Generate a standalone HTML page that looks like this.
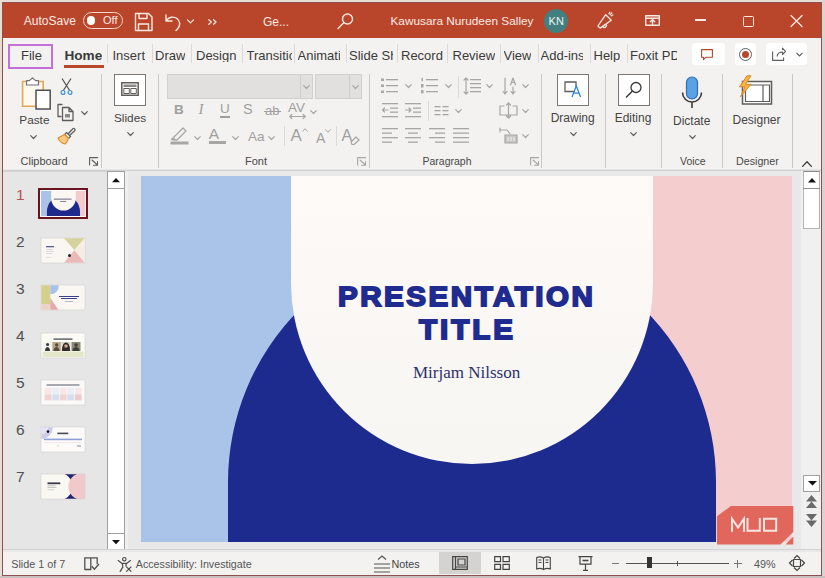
<!DOCTYPE html>
<html><head><meta charset="utf-8">
<style>
*{box-sizing:border-box;margin:0;padding:0}
html,body{width:825px;height:578px;overflow:hidden;background:#e9ded3;font-family:"Liberation Sans",sans-serif;position:relative}
.a{position:absolute}
.t{position:absolute;line-height:1;white-space:nowrap;color:#3b3a39}
svg{position:absolute;overflow:visible}
.tb{fill:none;stroke:#fbe9e3;stroke-width:1.4;stroke-linecap:round;stroke-linejoin:round}
.tab{position:absolute;top:49px;font-size:13px;line-height:1;white-space:nowrap;color:#3b3a39;overflow:hidden}
.sep{position:absolute;top:44px;width:1px;height:19px;background:#dcdad8}
.gsep{position:absolute;top:74px;width:1px;height:94px;background:#c9c7c5}
.ic{fill:none;stroke:#605e5c;stroke-width:1.2;stroke-linecap:round;stroke-linejoin:round}
.dis{fill:none;stroke:#a8a6a4;stroke-width:1.2;stroke-linecap:round;stroke-linejoin:round}
.lbl{position:absolute;font-size:12px;line-height:1;white-space:nowrap;color:#464442}
.glbl{position:absolute;font-size:11px;line-height:1;white-space:nowrap;color:#4a4846}
</style></head><body>
<!-- window frame -->
<div class="a" style="left:822px;top:0;width:3px;height:578px;background:#d8d4d0"></div>
<div class="a" style="left:0;top:576px;width:825px;height:2px;background:#c8c0bf"></div>
<div class="a" style="left:2px;top:2px;width:820px;height:574px;border:1px solid #8e5052;background:#f3f2f1"></div>
<!-- title bar -->
<div class="a" style="left:3px;top:3px;width:818px;height:35px;background:#b9462b"></div>
<div class="t" style="left:23.8px;top:15.2px;font-size:12px;color:#fbeae4">AutoSave</div>
<div class="a" style="left:83px;top:12px;width:40px;height:17px;border:1.5px solid #f3d3c8;border-radius:9px"></div>
<div class="a" style="left:86.8px;top:16.3px;width:8.6px;height:8.6px;border-radius:50%;background:#fff"></div>
<div class="t" style="left:103px;top:15.2px;font-size:11px;color:#fbeae4">Off</div>
<!-- save -->
<svg style="left:134px;top:12px" width="20" height="20" viewBox="0 0 20 20"><path class="tb" d="M1.5 1.5h13l3.5 3.5v13.5h-16.5z M5 1.5v5h8v-5 M4.5 18.5v-6.5h10v6.5"/></svg>
<!-- undo -->
<svg style="left:164px;top:13px" width="20" height="18" viewBox="0 0 20 18"><path class="tb" d="M2 2v6h6 M2.5 7.5c2-3.5 7-4.5 10.5-2 3.5 2.6 3.5 7.5 0.5 10.5l-1.5 1.5"/></svg>
<svg style="left:187px;top:19px" width="7" height="5" viewBox="0 0 7 5"><path class="tb" d="M0.5 0.8l3 3 3-3" style="stroke-width:1.2"/></svg>
<svg style="left:208px;top:18.5px" width="10" height="6" viewBox="0 0 10 6"><path class="tb" d="M0.8 0.8l2.5 2.2-2.5 2.2 M5.5 0.8l2.5 2.2-2.5 2.2" style="stroke-width:1.3"/></svg>
<div class="t" style="left:263px;top:16.2px;font-size:12px;color:#fbeae4">Ge...</div>
<!-- search -->
<svg style="left:337px;top:13px" width="17" height="17" viewBox="0 0 17 17"><circle class="tb" cx="10.5" cy="6" r="5"/><path class="tb" d="M7 9.5l-6 6"/></svg>
<div class="t" style="left:390.5px;top:16.2px;font-size:11.8px;color:#fbeae4">Kawusara Nurudeen Salley</div>
<div class="a" style="left:544.3px;top:8.8px;width:24px;height:24px;border-radius:50%;background:#447f80"></div>
<div class="t" style="left:548.6px;top:15.5px;font-size:11px;color:#eef5f5">KN</div>
<!-- megaphone -->
<svg style="left:596px;top:11px" width="20" height="20" viewBox="0 0 20 20"><path class="tb" d="M1.9 15L9.7 3.7 15.3 9.3 4.1 17.1z M6.8 15.6a2 2 0 0 0 3.3-2.4 M13 2.6l0.9-1.4 M15.2 4.8l1.6-0.8 M14.2 3.6l1.6-1.6" style="stroke-width:1.3"/></svg>
<!-- ribbon display -->
<svg style="left:645px;top:15.3px" width="15" height="11" viewBox="0 0 15 11"><path class="tb" d="M0.7 0.7h13.6v9.6h-13.6z M0.7 3.2h13.6 M7.5 9.5v-4.5 M5.3 6.8l2.2-2.2 2.2 2.2" style="stroke-width:1.4"/></svg>
<div class="a" style="left:695px;top:19.3px;width:11.3px;height:1.5px;background:#fbeae4"></div>
<div class="a" style="left:743px;top:15.5px;width:11px;height:11px;border:1.3px solid #fbeae4;border-radius:1.5px"></div>
<svg style="left:790px;top:15px" width="13" height="12" viewBox="0 0 13 12"><path class="tb" d="M1 0.5l11 11 M12 0.5l-11 11" style="stroke-width:1.3"/></svg>

<!-- tabs row -->
<div class="a" style="left:8px;top:43.5px;width:45px;height:25px;border:2.5px solid #c470d8"></div>
<div class="tab" style="left:21px">File</div>
<div class="tab" style="left:64.5px;font-weight:700;font-size:13.6px;top:48.6px">Home</div>
<div class="a" style="left:64px;top:64.7px;width:40px;height:3px;background:#b8472b"></div>
<div class="sep" style="left:107px"></div>
<div class="tab" style="left:112.5px">Insert</div>
<div class="sep" style="left:152px"></div>
<div class="tab" style="left:155px">Draw</div>
<div class="sep" style="left:191px"></div>
<div class="tab" style="left:196px">Design</div>
<div class="sep" style="left:242px"></div>
<div class="tab" style="left:246.5px;width:45px">Transitions</div>
<div class="sep" style="left:294px"></div>
<div class="tab" style="left:297.5px;width:42.5px">Animations</div>
<div class="sep" style="left:345.5px"></div>
<div class="tab" style="left:349px;width:43.5px">Slide Show</div>
<div class="sep" style="left:397px"></div>
<div class="tab" style="left:401px">Record</div>
<div class="sep" style="left:447px"></div>
<div class="tab" style="left:452.5px">Review</div>
<div class="sep" style="left:499.5px"></div>
<div class="tab" style="left:503.5px">View</div>
<div class="sep" style="left:537.5px"></div>
<div class="tab" style="left:540.5px;width:42.5px">Add-ins</div>
<div class="sep" style="left:590px"></div>
<div class="tab" style="left:593.5px">Help</div>
<div class="sep" style="left:626.5px"></div>
<div class="tab" style="left:630px;width:47px">Foxit PDF</div>
<div class="a" style="left:692px;top:43px;width:33px;height:22px;background:#fff;border-radius:3px"></div>
<svg style="left:701px;top:49px" width="12" height="12" viewBox="0 0 12 12"><path d="M0.6 0.6h10.8v7.6h-6.4l-2.5 2.5v-2.5h-1.9z" fill="none" stroke="#b8472b" stroke-width="1.1" stroke-linejoin="round"/></svg>
<div class="a" style="left:735px;top:43px;width:21px;height:22px;background:#fff;border-radius:3px"></div>
<div class="a" style="left:739px;top:47.5px;width:13px;height:13px;border-radius:50%;border:1.2px solid #605e5c"></div>
<div class="a" style="left:742px;top:50.5px;width:7px;height:7px;border-radius:50%;background:#b8472b"></div>
<div class="a" style="left:766px;top:43px;width:41px;height:22px;background:#fff;border-radius:3px"></div>
<svg style="left:772px;top:47px" width="14" height="14" viewBox="0 0 14 14"><path d="M0.6 4.5v8.9h11v-3 M5 9.5c0.5-3 2.5-4.5 5.5-4.5v2.5l3-3.2-3-3.2v2" fill="none" stroke="#605e5c" stroke-width="1.1" stroke-linejoin="round"/></svg>
<svg style="left:796px;top:52px" width="7" height="5" viewBox="0 0 7 5"><path d="M0.5 0.8l3 3 3-3" fill="none" stroke="#605e5c" stroke-width="1.2"/></svg>
<!-- Clipboard -->
<svg style="left:21px;top:77px" width="32" height="33" viewBox="0 0 32 33"><path d="M1.6 4.5h20.6v24.8h-20.6z" fill="#fdf8f0" stroke="#e0a850" stroke-width="1.6"/><path d="M5.5 8V3.6H8.5L11.5 0.9 14.5 3.6H17.5V8z" fill="#fff" stroke="#707070" stroke-width="1.2" stroke-linejoin="round"/><path d="M15 13.3h14.2v18.6h-14.2z" fill="#fff" stroke="#505050" stroke-width="1.5"/></svg>
<div class="lbl" style="left:19.3px;top:115.2px;font-size:11.8px">Paste</div>
<svg style="left:30px;top:135px" width="7" height="5" viewBox="0 0 7 5"><path class="ic" d="M0.7 0.7l2.8 2.8 2.8-2.8"/></svg>
<svg style="left:60px;top:78px" width="13" height="17" viewBox="0 0 13 17"><path d="M2 0.5l7.8 12.2 M11 0.5l-7.8 12.2" fill="none" stroke="#505050" stroke-width="1.2"/><circle cx="3" cy="14.4" r="1.9" fill="none" stroke="#3a8fd8" stroke-width="1.2"/><circle cx="10" cy="14.4" r="1.9" fill="none" stroke="#3a8fd8" stroke-width="1.2"/></svg>
<svg style="left:57px;top:102px" width="19" height="19" viewBox="0 0 19 19"><path class="ic" d="M5 2.5h-4v12h3 M5.5 5.5h6.5l4 4v9h-10.5z M12 5.5v4h4" style="stroke-width:1.3"/><path d="M8 12h5v3.5h-5z" fill="#8a8886"/></svg>
<svg style="left:81px;top:111px" width="7" height="5" viewBox="0 0 7 5"><path class="ic" d="M0.7 0.7l2.8 2.8 2.8-2.8"/></svg>
<svg style="left:57px;top:126px" width="19" height="19" viewBox="0 0 19 19"><path d="M11 8l5-5.5a1.6 1.6 0 0 1 2 2l-5.5 5" fill="none" stroke="#605e5c" stroke-width="1.3"/><path d="M9.5 6.5l4 4-2 2-4-4z" fill="#fff" stroke="#605e5c" stroke-width="1.2"/><path d="M7.5 8.5l4 4-3 5.5c-3-0.5-6.5-3-7.5-6z" fill="#f8c885" stroke="#e08f2e" stroke-width="1.2" stroke-linejoin="round"/></svg>
<div class="glbl" style="left:20.5px;top:156.3px">Clipboard</div>
<svg style="left:89px;top:157px" width="10" height="9" viewBox="0 0 10 9"><path class="ic" d="M0.6 8v-7.4h8 M3 3l5.5 5 M8.5 4.5v3.8h-4" style="stroke-width:1.1"/></svg>
<div class="gsep" style="left:101px"></div>
<!-- Slides -->
<div class="a" style="left:114px;top:74px;width:32px;height:32px;background:#fff;border:1.6px solid #7a7876"></div>
<svg style="left:121px;top:82px" width="18" height="14" viewBox="0 0 18 14"><path d="M0.8 0.8h16.4v12.4h-16.4z" fill="#fff" stroke="#605e5c" stroke-width="1.5"/><path d="M2.5 2.5h13v2.5h-13z" fill="#8a8886"/><path d="M2.8 6.5h5.5v5h-5.5z M9.8 6.5h5.5v5h-5.5z" fill="none" stroke="#605e5c" stroke-width="1"/></svg>
<div class="lbl" style="left:114px;top:112.6px;font-size:11.8px">Slides</div>
<svg style="left:127px;top:132px" width="7" height="5" viewBox="0 0 7 5"><path class="ic" d="M0.7 0.7l2.8 2.8 2.8-2.8"/></svg>
<div class="gsep" style="left:158px"></div>
<!-- Font -->
<div class="a" style="left:167px;top:74px;width:146px;height:25px;background:#e1e0df;border:1px solid #d2d0ce"></div>
<div class="a" style="left:299.5px;top:75px;width:1px;height:23px;background:#d0cecc"></div>
<svg style="left:303px;top:85px" width="7" height="5" viewBox="0 0 7 5"><path class="dis" d="M0.7 0.7l2.8 2.8 2.8-2.8"/></svg>
<div class="a" style="left:315px;top:74px;width:46.5px;height:25px;background:#e1e0df;border:1px solid #d2d0ce"></div>
<div class="a" style="left:348.5px;top:75px;width:1px;height:23px;background:#d0cecc"></div>
<svg style="left:352px;top:85px" width="7" height="5" viewBox="0 0 7 5"><path class="dis" d="M0.7 0.7l2.8 2.8 2.8-2.8"/></svg>
<div class="t" style="left:174px;top:102.9px;font-size:13.5px;font-weight:700;color:#a19f9d">B</div>
<div class="t" style="left:198.5px;top:102px;font-size:15px;font-style:italic;font-family:'Liberation Serif';color:#a19f9d">I</div>
<div class="t" style="left:220px;top:102.3px;font-size:13.5px;color:#a19f9d">U</div>
<div class="a" style="left:220px;top:116.4px;width:10px;height:1.2px;background:#a19f9d"></div>
<div class="t" style="left:243px;top:102.3px;font-size:14.5px;color:#a19f9d">S</div>
<div class="t" style="left:265px;top:104.2px;font-size:13px;color:#a19f9d">ab</div>
<div class="a" style="left:264px;top:111px;width:17px;height:1.2px;background:#a19f9d"></div>
<div class="t" style="left:288px;top:101.3px;font-size:13.5px;color:#a19f9d">AV</div>
<svg style="left:288.5px;top:113.5px" width="17" height="5" viewBox="0 0 17 5"><path class="dis" d="M0.7 2.5h15.6 M2.8 0.5l-2 2 2 2 M14.2 0.5l2 2-2 2"/></svg>
<svg style="left:309.5px;top:110px" width="7" height="5" viewBox="0 0 7 5"><path class="dis" d="M0.7 0.7l2.8 2.8 2.8-2.8"/></svg>
<svg style="left:169.5px;top:124.6px" width="19" height="20" viewBox="0 0 19 20"><path class="dis" d="M4 12l9-9 3 3-9 9h-3z M3 13l-1.5 1.5h3" style="stroke-width:1.3"/><rect x="0.5" y="16.5" width="18" height="3" fill="#a8a6a4"/></svg>
<svg style="left:193.5px;top:135.5px" width="7" height="5" viewBox="0 0 7 5"><path class="dis" d="M0.7 0.7l2.8 2.8 2.8-2.8"/></svg>
<div class="t" style="left:208.8px;top:125.5px;font-size:15.5px;color:#a19f9d">A</div>
<div class="a" style="left:208.5px;top:140.8px;width:17px;height:3.4px;background:#a8a6a4"></div>
<svg style="left:232px;top:135.5px" width="7" height="5" viewBox="0 0 7 5"><path class="dis" d="M0.7 0.7l2.8 2.8 2.8-2.8"/></svg>
<div class="t" style="left:248px;top:129.5px;font-size:13.5px;color:#a19f9d">Aa</div>
<svg style="left:268px;top:135.5px" width="7" height="5" viewBox="0 0 7 5"><path class="dis" d="M0.7 0.7l2.8 2.8 2.8-2.8"/></svg>
<div class="a" style="left:283.5px;top:126px;width:1px;height:20px;background:#dcdad8"></div>
<div class="t" style="left:290.5px;top:127px;font-size:17px;color:#a19f9d">A</div>
<svg style="left:302px;top:128px" width="6" height="4" viewBox="0 0 6 4"><path class="dis" d="M0.6 3.3l2.4-2.6 2.4 2.6" style="stroke-width:1"/></svg>
<div class="t" style="left:316px;top:130.5px;font-size:14px;color:#a19f9d">A</div>
<svg style="left:325px;top:129px" width="6" height="4" viewBox="0 0 6 4"><path class="dis" d="M0.6 0.7l2.4 2.6 2.4-2.6" style="stroke-width:1"/></svg>
<div class="a" style="left:336px;top:126px;width:1px;height:20px;background:#dcdad8"></div>
<div class="t" style="left:341.5px;top:127.5px;font-size:16px;color:#a19f9d">A</div>
<svg style="left:350px;top:136px" width="10" height="9" viewBox="0 0 10 9"><path class="dis" d="M1 6l5-5 3 3-5 4.5h-2z"/></svg>
<div class="glbl" style="left:245px;top:155.5px">Font</div>
<svg style="left:357px;top:157px" width="10" height="9" viewBox="0 0 10 9"><path class="dis" d="M0.6 8v-7.4h8 M3 3l5.5 5 M8.5 4.5v3.8h-4" style="stroke-width:1.1"/></svg>
<div class="gsep" style="left:369px"></div>
<!-- Paragraph -->
<svg style="left:380px;top:77px" width="19" height="18" viewBox="0 0 19 18"><g fill="#a8a6a4"><rect x="1" y="1.5" width="3" height="2.5"/><rect x="1" y="7.5" width="3" height="2.5"/><rect x="1" y="13.5" width="3" height="2.5"/><rect x="6" y="2" width="12" height="1.3"/><rect x="6" y="8" width="12" height="1.3"/><rect x="6" y="14" width="12" height="1.3"/></g></svg>
<svg style="left:405px;top:84px" width="7" height="5" viewBox="0 0 7 5"><path class="dis" d="M0.7 0.7l2.8 2.8 2.8-2.8"/></svg>
<svg style="left:420px;top:77px" width="19" height="18" viewBox="0 0 19 18"><g fill="#a8a6a4"><rect x="1.5" y="0.8" width="1.5" height="3.5"/><rect x="1" y="7" width="2.5" height="3.5"/><rect x="1" y="13" width="2.5" height="3.5"/><rect x="6" y="2" width="12" height="1.3"/><rect x="6" y="8" width="12" height="1.3"/><rect x="6" y="14" width="12" height="1.3"/></g></svg>
<svg style="left:444.5px;top:84px" width="7" height="5" viewBox="0 0 7 5"><path class="dis" d="M0.7 0.7l2.8 2.8 2.8-2.8"/></svg>
<div class="a" style="left:458px;top:76px;width:1px;height:22px;background:#dcdad8"></div>
<svg style="left:463px;top:77px" width="19" height="18" viewBox="0 0 19 18"><path class="dis" d="M3 1v16 M1 3l2-2 2 2 M1 15l2 2 2-2"/><g fill="#a8a6a4"><rect x="7" y="2" width="11" height="1.3"/><rect x="7" y="6" width="11" height="1.3"/><rect x="7" y="10" width="11" height="1.3"/><rect x="7" y="14" width="11" height="1.3"/></g></svg>
<svg style="left:486px;top:84px" width="7" height="5" viewBox="0 0 7 5"><path class="dis" d="M0.7 0.7l2.8 2.8 2.8-2.8"/></svg>
<svg style="left:502px;top:77px" width="15" height="18" viewBox="0 0 15 18"><path class="dis" d="M3 1v16 M1 14.5l2 2.5 2-2.5 M11 10v7 M9 14.5l2 2.5 2-2.5 M8.5 8l2.5-7 2.5 7 M9.3 5.5h3.4"/></svg>
<svg style="left:522px;top:84px" width="7" height="5" viewBox="0 0 7 5"><path class="dis" d="M0.7 0.7l2.8 2.8 2.8-2.8"/></svg>
<svg style="left:381px;top:102px" width="18" height="17" viewBox="0 0 18 17"><g fill="#a8a6a4"><rect x="1" y="1" width="16" height="1.3"/><rect x="9" y="5.5" width="8" height="1.3"/><rect x="9" y="9.5" width="8" height="1.3"/><rect x="1" y="14" width="16" height="1.3"/></g><path class="dis" d="M7 8h-5.5 M3.5 6l-2 2 2 2"/></svg>
<svg style="left:404px;top:102px" width="18" height="17" viewBox="0 0 18 17"><g fill="#a8a6a4"><rect x="1" y="1" width="16" height="1.3"/><rect x="9" y="5.5" width="8" height="1.3"/><rect x="9" y="9.5" width="8" height="1.3"/><rect x="1" y="14" width="16" height="1.3"/></g><path class="dis" d="M1.5 8h5.5 M5 6l2 2-2 2"/></svg>
<div class="a" style="left:428px;top:101px;width:1px;height:20px;background:#dcdad8"></div>
<svg style="left:434px;top:104px" width="15" height="12" viewBox="0 0 15 12"><g fill="#a8a6a4"><rect x="0.5" y="2" width="6" height="1.3"/><rect x="0.5" y="6" width="6" height="1.3"/><rect x="0.5" y="10" width="6" height="1.3"/><rect x="8.5" y="2" width="6" height="1.3"/><rect x="8.5" y="6" width="6" height="1.3"/><rect x="8.5" y="10" width="6" height="1.3"/></g></svg>
<svg style="left:454.5px;top:109px" width="7" height="5" viewBox="0 0 7 5"><path class="dis" d="M0.7 0.7l2.8 2.8 2.8-2.8"/></svg>
<svg style="left:499px;top:102px" width="19" height="17" viewBox="0 0 19 17"><path class="dis" d="M1 4h4 M14 4h4 M1 13h17 M1 4v9 M18 4v9 M9.5 1v15 M7.5 3l2-2 2 2 M7.5 14l2 2 2-2"/></svg>
<svg style="left:522px;top:109px" width="7" height="5" viewBox="0 0 7 5"><path class="dis" d="M0.7 0.7l2.8 2.8 2.8-2.8"/></svg>
<svg style="left:381px;top:127px" width="18" height="17" viewBox="0 0 18 17"><g fill="#a8a6a4"><rect x="1" y="1" width="16" height="1.3"/><rect x="1" y="5.5" width="10" height="1.3"/><rect x="1" y="10" width="16" height="1.3"/><rect x="1" y="14.5" width="10" height="1.3"/></g></svg>
<svg style="left:404px;top:127px" width="18" height="17" viewBox="0 0 18 17"><g fill="#a8a6a4"><rect x="1" y="1" width="16" height="1.3"/><rect x="4" y="5.5" width="10" height="1.3"/><rect x="1" y="10" width="16" height="1.3"/><rect x="4" y="14.5" width="10" height="1.3"/></g></svg>
<svg style="left:428px;top:127px" width="18" height="17" viewBox="0 0 18 17"><g fill="#a8a6a4"><rect x="1" y="1" width="16" height="1.3"/><rect x="7" y="5.5" width="10" height="1.3"/><rect x="1" y="10" width="16" height="1.3"/><rect x="7" y="14.5" width="10" height="1.3"/></g></svg>
<svg style="left:452px;top:127px" width="18" height="17" viewBox="0 0 18 17"><g fill="#a8a6a4"><rect x="1" y="1" width="16" height="1.3"/><rect x="1" y="5.5" width="16" height="1.3"/><rect x="1" y="10" width="16" height="1.3"/><rect x="1" y="14.5" width="16" height="1.3"/></g></svg>
<svg style="left:499px;top:127px" width="20" height="17" viewBox="0 0 20 17"><path class="dis" d="M1 3h7l3 4 M1 1v4"/><path d="M6 8h12v8h-12z" fill="#c8c6c4" stroke="#a8a6a4" stroke-width="1.2"/><path d="M9 10v4 M12 10v4 M15 10v4" stroke="#f3f2f1" stroke-width="1"/></svg>
<svg style="left:522px;top:134px" width="7" height="5" viewBox="0 0 7 5"><path class="dis" d="M0.7 0.7l2.8 2.8 2.8-2.8"/></svg>
<div class="glbl" style="left:422.5px;top:155.7px;font-size:10.5px">Paragraph</div>
<svg style="left:529.5px;top:157px" width="10" height="9" viewBox="0 0 10 9"><path class="dis" d="M0.6 8v-7.4h8 M3 3l5.5 5 M8.5 4.5v3.8h-4" style="stroke-width:1.1"/></svg>
<div class="gsep" style="left:541px"></div>
<!-- Drawing -->
<div class="a" style="left:557px;top:74px;width:32px;height:32px;background:#fff;border:1.6px solid #7a7876"></div>
<svg style="left:564px;top:81px" width="18" height="17" viewBox="0 0 18 17"><path d="M10.5 10.5h-9.5v-9.5h11v6" fill="none" stroke="#605e5c" stroke-width="1.3"/><path d="M8 16l4.3-11 4.3 11 M9.6 12.2h5.4" fill="none" stroke="#2b88d8" stroke-width="1.3"/></svg>
<div class="lbl" style="left:550.7px;top:112.2px">Drawing</div>
<svg style="left:570px;top:132px" width="7" height="5" viewBox="0 0 7 5"><path class="ic" d="M0.7 0.7l2.8 2.8 2.8-2.8"/></svg>
<div class="gsep" style="left:605px"></div>
<!-- Editing -->
<div class="a" style="left:618px;top:74px;width:32px;height:32px;background:#fff;border:1.6px solid #7a7876"></div>
<svg style="left:625px;top:81px" width="18" height="18" viewBox="0 0 18 18"><circle cx="11" cy="6.5" r="5" fill="none" stroke="#3b3a39" stroke-width="1.3"/><path d="M7.5 10l-6 6" stroke="#3b3a39" stroke-width="1.5" stroke-linecap="round"/></svg>
<div class="lbl" style="left:614.7px;top:112.2px">Editing</div>
<svg style="left:630px;top:132px" width="7" height="5" viewBox="0 0 7 5"><path class="ic" d="M0.7 0.7l2.8 2.8 2.8-2.8"/></svg>
<div class="gsep" style="left:661px"></div>
<!-- Voice -->
<svg style="left:681px;top:76px" width="22" height="33" viewBox="0 0 22 33"><rect x="5.5" y="1" width="11" height="22" rx="5.5" fill="#5ba1e4" stroke="#2c6db5" stroke-width="1.2"/><path d="M1.5 16.5a9.5 9.5 0 0 0 19 0 M11 26v6" fill="none" stroke="#3b3a39" stroke-width="1.6"/></svg>
<div class="lbl" style="left:673px;top:115.2px">Dictate</div>
<svg style="left:689px;top:135px" width="7" height="5" viewBox="0 0 7 5"><path class="ic" d="M0.7 0.7l2.8 2.8 2.8-2.8"/></svg>
<div class="glbl" style="left:680px;top:155.7px;font-size:10.5px">Voice</div>
<div class="gsep" style="left:722px"></div>
<!-- Designer -->
<svg style="left:738px;top:75px" width="36" height="31" viewBox="0 0 36 31"><path d="M4.5 6.5h29v22.5h-29z" fill="#fff" stroke="#605e5c" stroke-width="1.5"/><path d="M7.5 10h24v16.5h-24z M25 10v16.5" fill="none" stroke="#605e5c" stroke-width="1.2"/><path d="M9 0.8l-7.5 11h5.5l-4.5 10 10.5-12.5h-5.5l5.5-8.5z" fill="#f7b640" stroke="#d8882a" stroke-width="1" stroke-linejoin="round"/></svg>
<div class="lbl" style="left:732.5px;top:114.3px">Designer</div>
<div class="glbl" style="left:736px;top:155.7px;font-size:10.7px">Designer</div>
<div class="gsep" style="left:792px"></div>
<svg style="left:802px;top:160.5px" width="10" height="6" viewBox="0 0 10 6"><path class="ic" d="M0.6 5.4l4.4-4.6 4.4 4.6" style="stroke-width:1.3;stroke:#3b3a39"/></svg>

<!-- main area -->
<div class="a" style="left:3px;top:169px;width:818px;height:382px;background:#e6e6e6"></div>
<div class="a" style="left:3px;top:169.5px;width:818px;height:2.5px;background:#d2d2d2"></div>
<div class="a" style="left:125px;top:171px;width:678px;height:379px;background:#e8e8e8"></div>
<!-- thumbnails -->
<div class="t" style="left:16px;top:187.2px;font-size:15.5px;color:#b9524d">1</div>
<div class="a" style="left:37.7px;top:187.8px;width:50px;height:31px;border:2.6px solid #6a1420;background:#fff"></div>
<svg style="left:40.8px;top:190.8px" width="44.2" height="25" viewBox="0 0 651 366" preserveAspectRatio="none">
<rect width="651" height="366" fill="#a8c3e7"/><rect x="325" width="326" height="366" fill="#f4cbcd"/>
<path d="M87 366V304a244 244 0 0 1 488 0V366z" fill="#1e2a8c"/>
<path d="M150 0H512V105a181 181 0 0 1-362 0z" fill="#faf7f2"/>
<rect x="189" y="112" width="261" height="13" fill="#2a2d5a" opacity="0.8"/><rect x="282" y="146" width="90" height="12" fill="#2a2d5a" opacity="0.7"/>
</svg>
<div class="t" style="left:16px;top:233.8px;font-size:15.5px;color:#505050">2</div>
<div class="t" style="left:16px;top:280.9px;font-size:15.5px;color:#505050">3</div>
<div class="t" style="left:16px;top:328.0px;font-size:15.5px;color:#505050">4</div>
<div class="t" style="left:16px;top:375.1px;font-size:15.5px;color:#505050">5</div>
<div class="t" style="left:16px;top:422.2px;font-size:15.5px;color:#505050">6</div>
<div class="t" style="left:16px;top:469.3px;font-size:15.5px;color:#505050">7</div>
<!-- thumb 2 -->
<svg style="left:40.5px;top:238.3px" width="44" height="25" viewBox="0 0 44 25">
<rect x="0" y="0" width="44" height="25" fill="#faf7f2" stroke="#cfcfcf" stroke-width="0.6"/>
<path d="M23 0.3h20.7L33.5 12z" fill="#d6d29e"/><path d="M33.5 12L43.7 24.7H23z" fill="#ebb9ba"/><path d="M43.7 0.3V24.7L33.5 12z" fill="#f6ede2"/>
<circle cx="28.5" cy="17.5" r="1.5" fill="#222"/>
<rect x="5" y="8" width="8" height="1.3" fill="#5a5f9a"/><rect x="5" y="11" width="7" height="0.6" fill="#c5c5d0"/><rect x="5" y="13" width="8" height="0.6" fill="#c5c5d0"/><rect x="5" y="15" width="6" height="0.6" fill="#c5c5d0"/><rect x="5" y="19" width="5" height="0.6" fill="#d0d0d0"/>
</svg>
<!-- thumb 3 -->
<svg style="left:40.5px;top:285.4px" width="44" height="25" viewBox="0 0 44 25">
<rect x="0" y="0" width="44" height="25" fill="#faf7f2" stroke="#cfcfcf" stroke-width="0.6"/>
<rect x="0.3" y="0.3" width="9" height="19" fill="#d3d08e"/><rect x="0.3" y="19" width="9" height="5.7" fill="#edd2c8"/>
<path d="M9.3 0.3h8.5a8.5 8.5 0 0 1-8.5 9z" fill="#a9c3e8"/><path d="M9.3 13l8 11.7h-8z" fill="#e6a9ab"/>
<rect x="18" y="11" width="20" height="1" fill="#3a3f8a"/><rect x="20" y="13" width="16" height="1" fill="#3a3f8a"/><rect x="24" y="16" width="8" height="0.7" fill="#9a9ab0"/>
</svg>
<!-- thumb 4 -->
<svg style="left:40.5px;top:332.5px" width="44" height="25" viewBox="0 0 44 25">
<rect x="0" y="0" width="44" height="25" fill="#fbfaf5" stroke="#d0d0d0" stroke-width="0.6"/>
<rect x="1.5" y="18.5" width="41" height="5.5" fill="#e3e6c8"/>
<rect x="12.5" y="5.4" width="19" height="1.4" fill="#5a5a60"/>
<rect x="2.5" y="9" width="8" height="9" fill="#f4f4f0"/><path d="M4 18c0-3 1.5-4 2.5-4s2.5 1 2.5 4z M5 11.5a1.6 1.6 0 1 0 3.2 0 1.6 1.6 0 1 0-3.2 0" fill="#3a3a3a"/>
<rect x="11.3" y="9" width="8.5" height="9" fill="#b9a58a"/><path d="M12.5 18c0-3 1.8-4 3-4s3 1 3 4z M14 12a1.7 1.7 0 1 0 3.4 0 1.7 1.7 0 1 0-3.4 0" fill="#5a4a3a"/>
<rect x="20.5" y="9" width="9" height="9" fill="#d8d2c8"/><path d="M21 18c0-5 1.5-8.5 4-8.5s4 3.5 4 8.5z" fill="#2e2a28"/><circle cx="25" cy="13" r="1.8" fill="#c9a88c"/>
<rect x="30.5" y="9" width="9" height="9" fill="#8a8a7a"/><path d="M31.5 18c0-3 2-4 3.5-4s3.5 1 3.5 4z M33.3 12a1.8 1.8 0 1 0 3.6 0 1.8 1.8 0 1 0-3.6 0" fill="#3e3e36"/>
</svg>
<!-- thumb 5 -->
<svg style="left:40.5px;top:379.6px" width="44" height="25" viewBox="0 0 44 25">
<rect x="0" y="0" width="44" height="25" fill="#fbfaf8" stroke="#d0d0d0" stroke-width="0.6"/>
<rect x="5.5" y="4.3" width="33" height="1.4" fill="#6a6a80" opacity="0.8"/>
<g opacity="0.9"><rect x="3.6" y="7.7" width="7" height="6.7" fill="#f8e6e6"/><rect x="11.3" y="7.7" width="6.8" height="6.7" fill="#e8eef8"/><rect x="18.8" y="7.7" width="6.8" height="6.7" fill="#f8e6e6"/><rect x="26.2" y="7.7" width="6.8" height="6.7" fill="#e8eef8"/><rect x="33.8" y="7.7" width="6.8" height="6.7" fill="#f8e6e6"/>
<rect x="3.6" y="14.4" width="7" height="6" fill="#f1cfd1"/><rect x="11.3" y="14.4" width="6.8" height="6" fill="#d3ddf1"/><rect x="18.8" y="14.4" width="6.8" height="6" fill="#f1cfd1"/><rect x="26.2" y="14.4" width="6.8" height="6" fill="#d3ddf1"/><rect x="33.8" y="14.4" width="6.8" height="6" fill="#eec5c8"/></g>
</svg>
<!-- thumb 6 -->
<svg style="left:40.5px;top:426.7px" width="44" height="25" viewBox="0 0 44 25">
<rect x="0" y="0" width="44" height="25" fill="#fcfbf9" stroke="#d0d0d0" stroke-width="0.6"/>
<path d="M0.3 0.3h11.5a11.5 11.5 0 0 1-11.5 11.5z" fill="#cdcbe8"/><path d="M0.3 0.3h7a7 7 0 0 1-7 7z" fill="#e4e2f2"/><circle cx="7" cy="4.6" r="1.3" fill="#111"/>
<rect x="16.3" y="5.6" width="11" height="1.6" fill="#4a4a55"/>
<rect x="3" y="11.6" width="38" height="1.6" fill="#8ea0d8"/>
<rect x="3" y="15" width="38" height="0.6" fill="#f0dcdc"/>
<rect x="36" y="18.5" width="4" height="1" fill="#8a8a8a"/><rect x="16" y="18.5" width="2" height="0.8" fill="#d8c8a8"/>
</svg>
<!-- thumb 7 -->
<svg style="left:40.5px;top:473.8px" width="44" height="25" viewBox="0 0 44 25">
<defs><clipPath id="t7"><rect x="0" y="0" width="44" height="25"/></clipPath></defs>
<g clip-path="url(#t7)">
<rect x="0" y="0" width="44" height="25" fill="#faf8f3"/>
<rect x="23" y="0" width="21" height="25" fill="#1e2470"/>
<circle cx="17.7" cy="12.5" r="13.8" fill="#faf8f3"/>
<circle cx="40.7" cy="12.5" r="13.3" fill="#f2c9ca"/>
</g>
<rect x="0" y="0" width="44" height="25" fill="none" stroke="#d0d0d0" stroke-width="0.6"/>
<rect x="6.5" y="8.4" width="12.8" height="1.8" fill="#3a3a48"/><rect x="6.5" y="11.5" width="8" height="0.7" fill="#b0b0b0"/><rect x="6.5" y="13.3" width="9" height="0.7" fill="#b0b0b0"/><rect x="6.5" y="15.5" width="7" height="0.7" fill="#c0c0c0"/>
</svg>
<!-- thumb scrollbar -->
<div class="a" style="left:124.5px;top:172px;width:3.5px;height:377px;background:#efefef"></div>
<div class="a" style="left:107px;top:171px;width:18px;height:380px;background:#fff;border:1.5px solid #a0a0a0"></div>
<div class="a" style="left:107px;top:187.5px;width:18px;height:1.5px;background:#a0a0a0"></div>
<div class="a" style="left:107px;top:532.5px;width:18px;height:1.5px;background:#a0a0a0"></div>
<svg style="left:112px;top:177.7px" width="8" height="4.3" viewBox="0 0 8 4.3"><path d="M0 4.3L4 0 8 4.3z" fill="#111"/></svg>
<svg style="left:112px;top:539.5px" width="8" height="4.3" viewBox="0 0 8 4.3"><path d="M0 0L4 4.3 8 0z" fill="#111"/></svg>
<!-- SLIDE -->
<svg style="left:141px;top:176px" width="651" height="366" viewBox="0 0 651 366">
<defs><linearGradient id="cg" x1="0" y1="0" x2="0" y2="1"><stop offset="0" stop-color="#fefaf7"/><stop offset="0.35" stop-color="#fbf8f5"/><stop offset="1" stop-color="#f7f6f2"/></linearGradient></defs>
<rect width="651" height="366" fill="#a9c4e8"/><rect x="325" width="326" height="366" fill="#f4cdcf"/>
<path d="M87 366V306a244 244 0 0 1 488 0V366z" fill="#1e2b8e"/>
<path d="M150 0H512V107a181 181 0 0 1-362 0z" fill="url(#cg)"/>
</svg>
<div class="t" id="pt" style="left:337.6px;top:283.2px;font-size:27.6px;font-weight:700;color:#1f2b8e;letter-spacing:2.38px;transform-origin:0 0;transform:scaleX(1.07);-webkit-text-stroke:1.8px #1f2b8e">PRESENTATION</div>
<div class="t" id="tt" style="left:419.3px;top:316px;font-size:27.6px;font-weight:700;color:#1f2b8e;letter-spacing:2.77px;transform-origin:0 0;transform:scaleX(1.07);-webkit-text-stroke:1.8px #1f2b8e">TITLE</div>
<div class="t" style="left:413px;top:364px;font-size:17px;font-family:'Liberation Serif';color:#2b2f6e">Mirjam Nilsson</div>
<!-- MUO logo -->
<svg style="left:716.6px;top:506.2px" width="77" height="39" viewBox="0 0 77 39"><path d="M0 10.3L14 0H76.3V26L63.5 38.6H0z" fill="#e1675d"/><path d="M68.5 38.6L76.3 30.5V38.6z" fill="#e1675d"/><path d="M15 25.8V12.8L21 21.5 27 12.8V25.8 M30.5 12V24.8H42.8V12 M47 12.8h12.2v12H47z" fill="none" stroke="#fde6e2" stroke-width="2"/></svg>
<!-- right scrollbar -->
<div class="a" style="left:800.5px;top:171px;width:20.5px;height:378px;background:#f0f0f0"></div>
<div class="a" style="left:802.5px;top:171px;width:17.5px;height:58px;background:#fff;border:1.3px solid #b4b4b4;border-top-color:#8a8a8a"></div>
<div class="a" style="left:802.5px;top:187.6px;width:17.5px;height:1.3px;background:#909090"></div>
<svg style="left:807.5px;top:177.5px" width="8" height="4.5" viewBox="0 0 8 4.5"><path d="M0 4.5L4 0 8 4.5z" fill="#111"/></svg>
<div class="a" style="left:803px;top:475px;width:17px;height:17px;background:#fff;border:1.3px solid #a0a0a0"></div>
<svg style="left:807.5px;top:481px" width="9" height="5" viewBox="0 0 9 5"><path d="M0 0L4.5 4.5 9 0z" fill="#111"/></svg>
<svg style="left:806px;top:495px" width="11" height="32" viewBox="0 0 11 32"><path d="M0 6.5L5.5 0 11 6.5z M0 13L5.5 6.5 11 13z M0 19L5.5 25.5 11 19z M0 25.5L5.5 32 11 25.5z" fill="#6a6a6a"/></svg>
<!-- status bar -->
<div class="a" style="left:3px;top:549px;width:818px;height:1px;background:#d2d2d2"></div>
<div class="a" style="left:3px;top:550px;width:818px;height:1.5px;background:#e9e9e9"></div>
<div class="a" style="left:3px;top:551.5px;width:818px;height:23px;background:#f3f2f1"></div>
<div class="t" style="left:11.2px;top:558.5px;font-size:10.8px;color:#555">Slide 1 of 7</div>
<svg style="left:84px;top:557px" width="16" height="14" viewBox="0 0 16 14"><path d="M0.8 0.8H6.8V12.5H0.8z M6.8 0.8H13.2V7.2" fill="none" stroke="#505050" stroke-width="1.3" stroke-linejoin="round"/><path d="M7.8 9.3l2.6 3 4.6-5.3" fill="none" stroke="#505050" stroke-width="1.3"/></svg>
<svg style="left:116.5px;top:556.5px" width="16" height="15" viewBox="0 0 16 15"><circle cx="7.3" cy="2.2" r="1.7" fill="none" stroke="#505050" stroke-width="1.2"/><path d="M1.2 3.6l3.8 2.8h4.6l3.8-2.8 M5.4 6.6l0.4 3.6-2.6 4.2 M9.2 6.6l-0.2 2.4" fill="none" stroke="#505050" stroke-width="1.3" stroke-linecap="round" stroke-linejoin="round"/><path d="M9.3 9.6l5 5 M14.3 9.6l-5 5" stroke="#505050" stroke-width="1.3"/></svg>
<div class="t" style="left:135.8px;top:558.5px;font-size:10.7px;color:#555">Accessibility: Investigate</div>
<svg style="left:373px;top:555px" width="18" height="18" viewBox="0 0 18 18"><path d="M5 4.5l4-3.5 4 3.5 M1 9h16 M1 13h16 M1 17h16" fill="none" stroke="#555" stroke-width="1.2"/></svg>
<div class="t" style="left:391.5px;top:558.5px;font-size:10.8px;color:#444">Notes</div>
<div class="a" style="left:438.5px;top:551.5px;width:42px;height:22.5px;background:#d4d3d2"></div>
<svg style="left:452px;top:556px" width="16" height="14" viewBox="0 0 16 14"><path d="M0.7 0.7h14.6v12.6h-14.6z M3.5 0.7v12.6 M6 3h7v6h-7z M3.5 11h11.8" fill="none" stroke="#444" stroke-width="1.2"/></svg>
<svg style="left:494px;top:556px" width="16" height="14" viewBox="0 0 16 14"><path d="M0.7 0.7h5.8v5h-5.8z M9 0.7h6.3v5h-6.3z M0.7 8.3h5.8v5h-5.8z M9 8.3h6.3v5h-6.3z" fill="none" stroke="#444" stroke-width="1.2"/></svg>
<svg style="left:536px;top:556px" width="15" height="14" viewBox="0 0 15 14"><path d="M0.7 1.5c2.5-1 4.5-0.8 6.8 0.5 2.3-1.3 4.3-1.5 6.8-0.5v11.5c-2.5-1-4.5-0.8-6.8 0.5-2.3-1.3-4.3-1.5-6.8-0.5z M7.5 2v11.5 M2.5 4h3 M2.5 6.5h3 M9.5 4h3 M9.5 6.5h3" fill="none" stroke="#444" stroke-width="1.1"/></svg>
<svg style="left:577.5px;top:556px" width="15" height="15" viewBox="0 0 15 15"><path d="M0.5 0.7h14 M2 0.7v7.5h11v-7.5 M7.5 8.2v4 M5 14.3h5 M7.5 12.3v2" fill="none" stroke="#444" stroke-width="1.2"/><path d="M4.5 4.5h6" stroke="#444" stroke-width="1.6"/></svg>
<div class="a" style="left:612.3px;top:563px;width:6.5px;height:1.1px;background:#777"></div>
<div class="a" style="left:625.5px;top:563px;width:103px;height:1.3px;background:#555"></div>
<div class="a" style="left:646.5px;top:557.3px;width:5.5px;height:11px;background:#333"></div>
<div class="a" style="left:676.5px;top:560.8px;width:1.2px;height:5.5px;background:#555"></div>
<div class="a" style="left:733.6px;top:563px;width:8.2px;height:1.1px;background:#777"></div>
<div class="a" style="left:737.1px;top:559.5px;width:1.1px;height:8.2px;background:#777"></div>
<div class="t" style="left:754px;top:558.5px;font-size:10.8px;color:#555">49%</div>
<svg style="left:788.5px;top:555px" width="16" height="16" viewBox="0 0 16 16"><path d="M5 3.5l3-3 3 3 M5 12.5l3 3 3-3 M3.5 5l-3 3 3 3 M12.5 5l3 3-3 3" fill="none" stroke="#444" stroke-width="1.2"/><path d="M4.5 4.5h7v7h-7z" fill="none" stroke="#444" stroke-width="1.2"/></svg>



<!--RIBBON2-->
</body></html>
